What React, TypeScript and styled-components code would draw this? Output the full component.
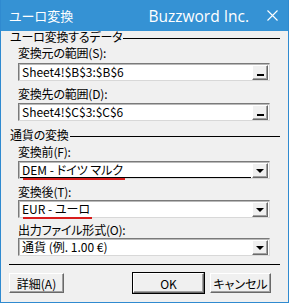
import React from "react";
import styled, { createGlobalStyle } from "styled-components";

const Global = createGlobalStyle`
  html, body { margin: 0; padding: 0; background: #ffffff; }
  * { box-sizing: border-box; }
`;

const Window = styled.div`
  width: 289px;
  height: 303px;
  border: 1px solid #2f8ad0;
  border-top: none;
  background: #f0f0f0;
  display: flex;
  flex-direction: column;
  font-family: "Noto Sans CJK JP", "Noto Sans", sans-serif;
  font-feature-settings: "palt" 1;
  font-size: 12px;
  color: #000;
  overflow: hidden;
`;

const TitleBar = styled.div`
  flex-shrink: 0;
  height: 31px;
  margin: 0 -1px;
  background: #3592d4;
  color: #fff;
  display: flex;
  align-items: center;
  padding: 0 0 0 9px;
`;

const TitleText = styled.div`
  font-size: 13px;
  flex: 1;
`;

const Brand = styled.div`
  font-family: "Open Sans", "Noto Sans", sans-serif;
  font-size: 15.5px;
  margin-right: 13px;
`;

const Close = styled.div`
  width: 20px;
  margin-right: 7px;
  display: flex;
  justify-content: center;
`;

const Body = styled.div`
  flex: 1;
  display: flex;
  flex-direction: column;
  padding: 0 8px;
  & > * {
    flex-shrink: 0;
  }
`;

const SectionHead = styled.div<{ $top: number }>`
  display: flex;
  align-items: center;
  margin-top: ${(p) => p.$top}px;
  height: 14px;
  line-height: 14px;
  margin-left: 1px;
  letter-spacing: -0.2px;
`;

const Rule = styled.div`
  flex: 1;
  height: 1px;
  background: #000;
  margin-left: 1px;
  margin-top: 3px;
`;

const Label = styled.div<{ $top: number }>`
  margin-left: 9px;
  margin-top: ${(p) => p.$top}px;
  height: 14px;
  line-height: 14px;
  letter-spacing: -0.2px;
`;

const Field = styled.div<{ $top: number }>`
  position: relative;
  margin-left: 9px;
  margin-right: 10px;
  margin-top: ${(p) => p.$top}px;
  height: 18px;
  background: #fff;
  border-top: 1px solid #7a7a7a;
  border-left: 1px solid #7a7a7a;
  border-right: 1px solid #d8d8d8;
  border-bottom: 1px solid #d8d8d8;
  box-shadow: inset 1px 1px 0 #b9b9b9;
  display: flex;
  align-items: center;
  padding-left: 3px;
  padding-right: 1px;
`;

const FieldText = styled.div`
  flex: 1;
  position: relative;
  white-space: nowrap;
  line-height: 14px;
`;

const Mark = styled.span`
  position: relative;
  display: inline-block;
  &::after {
    content: "";
    position: absolute;
    left: 1px;
    right: -2px;
    bottom: -3px;
    height: 2px;
    background: #d81c1c;
  }
`;

const FocusLine = styled.div`
  position: absolute;
  left: 1px;
  right: 18px;
  bottom: 0;
  height: 1px;
  background: #000;
`;

const RaisedBtn = styled.div`
  width: 16px;
  height: 15px;
  background: #f0f0f0;
  border-top: 1px solid #fff;
  border-left: 1px solid #fff;
  border-right: 1px solid #696969;
  border-bottom: 1px solid #696969;
  box-shadow: inset -1px -1px 0 #a0a0a0;
  display: flex;
  align-items: center;
  justify-content: center;
`;

const Dash = styled.div`
  width: 7px;
  height: 2px;
  background: #000;
  margin-top: 5px;
`;

const Arrow = styled.div`
  width: 0;
  height: 0;
  border-left: 4px solid transparent;
  border-right: 4px solid transparent;
  border-top: 4px solid #000;
  margin-top: 1px;
`;

const BottomRule = styled.div`
  height: 1px;
  background: #000;
  margin-top: 8px;
`;

const ButtonRow = styled.div`
  display: flex;
  margin-top: 8px;
  margin-right: 9px;
  height: 20px;
`;

const PushButton = styled.div<{ $w: number; $gap?: number; $default?: boolean }>`
  width: ${(p) => p.$w}px;
  height: 20px;
  margin-left: ${(p) => p.$gap ?? 0}px;
  background: #f0f0f0;
  display: flex;
  align-items: center;
  justify-content: center;
  border-top: 1px solid #fff;
  border-left: 1px solid #fff;
  border-right: 1px solid #696969;
  border-bottom: 1px solid #696969;
  box-shadow: inset -1px -1px 0 #a0a0a0;
  ${(p) => (p.$default ? `outline: 1px solid #000;` : "")}
`;

const Spacer = styled.div`
  flex: 1;
`;

export default function App() {
  return (
    <>
      <Global />
      <Window>
        <TitleBar>
          <TitleText>ユーロ変換</TitleText>
          <Brand>Buzzword Inc.</Brand>
          <Close>
            <svg width="11" height="11" viewBox="0 0 11 11">
              <path d="M0.5 0.5 L10.5 10.5 M10.5 0.5 L0.5 10.5" stroke="#fff" strokeWidth="1.1" />
            </svg>
          </Close>
        </TitleBar>
        <Body>
          <SectionHead $top={-1}>
            ユーロ変換するデータ
            <Rule />
          </SectionHead>
          <Label $top={2}>変換元の範囲(S):</Label>
          <Field $top={3}>
            <FieldText>Sheet4!$B$3:$B$6</FieldText>
            <RaisedBtn>
              <Dash />
            </RaisedBtn>
          </Field>
          <Label $top={6}>変換先の範囲(D):</Label>
          <Field $top={2}>
            <FieldText>Sheet4!$C$3:$C$6</FieldText>
            <RaisedBtn>
              <Dash />
            </RaisedBtn>
          </Field>
          <SectionHead $top={7}>
            通貨の変換
            <Rule />
          </SectionHead>
          <Label $top={3}>変換前(F):</Label>
          <Field $top={2}>
            <FieldText>
              <Mark>DEM - ドイツ マルク</Mark>
            </FieldText>
            <FocusLine />
            <RaisedBtn>
              <Arrow />
            </RaisedBtn>
          </Field>
          <Label $top={6}>変換後(T):</Label>
          <Field $top={1}>
            <FieldText>
              <Mark>EUR - ユーロ</Mark>
            </FieldText>
            <RaisedBtn>
              <Arrow />
            </RaisedBtn>
          </Field>
          <Label $top={5}>出力ファイル形式(O):</Label>
          <Field $top={1}>
            <FieldText>通貨 (例. 1.00 €)</FieldText>
            <RaisedBtn>
              <Arrow />
            </RaisedBtn>
          </Field>
          <BottomRule />
          <ButtonRow>
            <PushButton $w={55}>詳細(A)</PushButton>
            <Spacer />
            <PushButton $w={71} $default>
              OK
            </PushButton>
            <PushButton $w={61} $gap={6}>
              キャンセル
            </PushButton>
          </ButtonRow>
        </Body>
      </Window>
    </>
  );
}
